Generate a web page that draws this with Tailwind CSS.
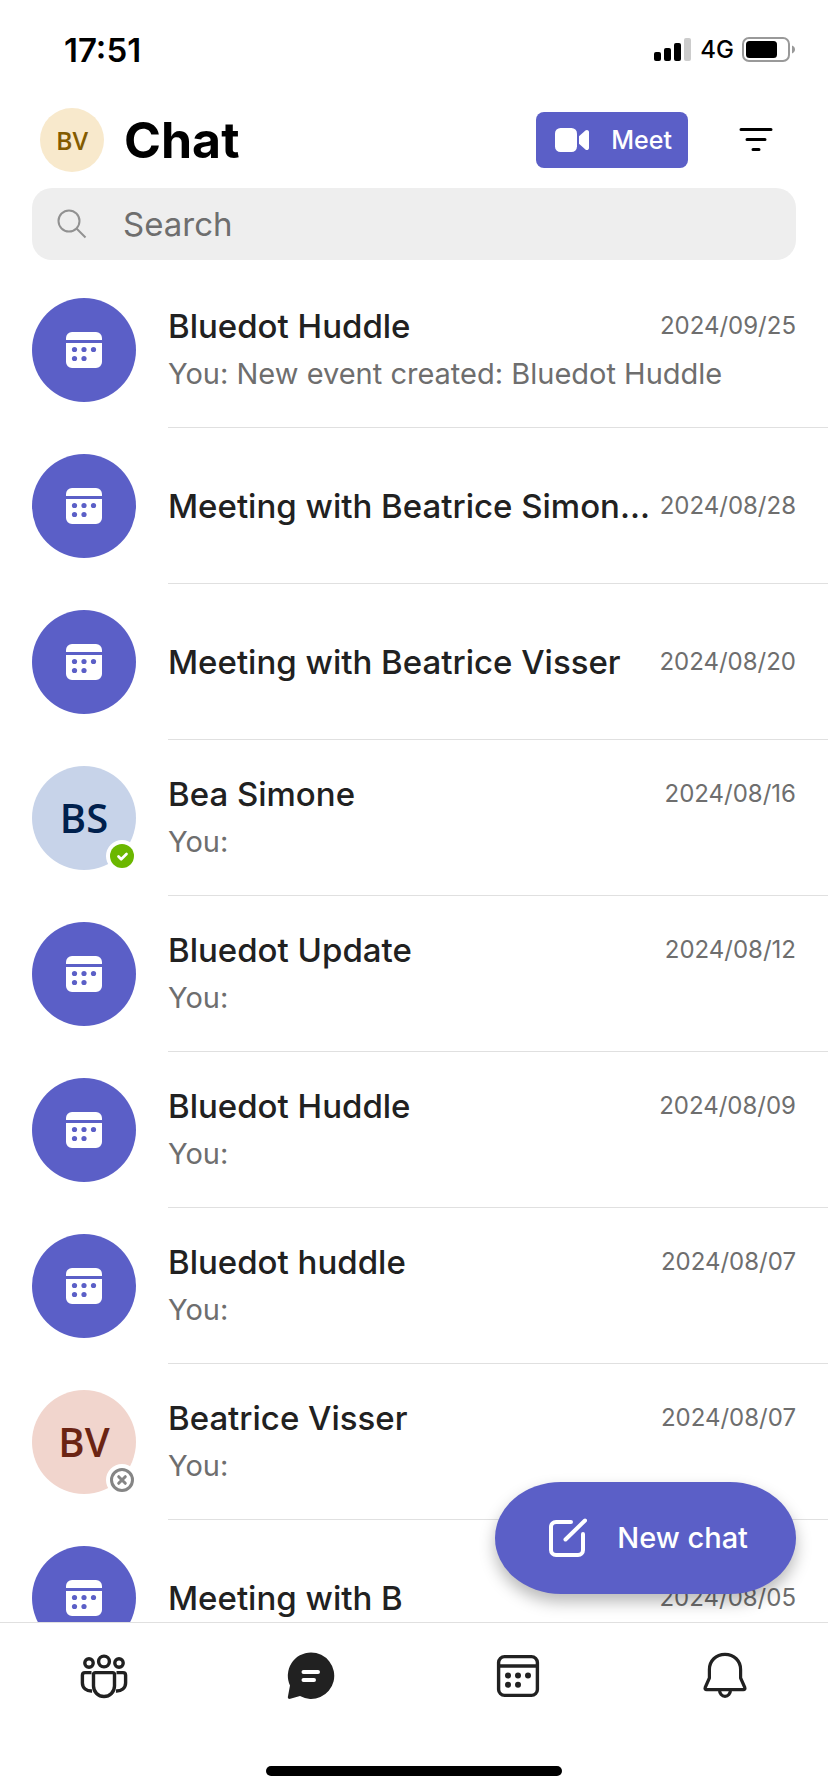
<!DOCTYPE html>
<html lang="en">
<head>
<meta charset="utf-8">
<meta name="viewport" content="width=device-width, initial-scale=1">
<title>Chat</title>
<script src="https://cdn.jsdelivr.net/npm/@tailwindcss/browser@4"></script>
</head>
<body class="bg-white">
<svg class="hidden" aria-hidden="true">
  <symbol id="event" viewBox="0 0 36 36">
    <path fill="#fff" d="M0 8V6a6 6 0 0 1 6-6h24a6 6 0 0 1 6 6v2zM0 11h36v19a6 6 0 0 1-6 6H6a6 6 0 0 1-6-6z"/>
    <g fill="#5b5fc7"><circle cx="8.500" cy="17.500" r="2.600"/><circle cx="18" cy="17.500" r="2.600"/><circle cx="27.500" cy="17.500" r="2.600"/><circle cx="8.500" cy="26.500" r="2.600"/><circle cx="18" cy="26.500" r="2.600"/></g>
  </symbol>
</svg>
<div class="flex h-screen flex-col overflow-hidden bg-white font-['Inter','Liberation_Sans',sans-serif] text-[#212121]">
  <!-- Status bar -->
  <div class="flex h-[100px] shrink-0 items-center justify-between pr-8 pl-16 text-black">
    <span class="text-[33px] leading-10 font-semibold">17:51</span>
    <div class="flex items-center gap-2">
      <svg class="h-6 w-[38px]" viewBox="0 0 38 24" aria-label="Signal"><rect x="0" y="14" width="7" height="9" rx="2"/><rect x="10" y="10" width="7" height="13" rx="2"/><rect x="20" y="5" width="7" height="18" rx="2"/><rect x="30" y="0" width="7" height="23" rx="2" fill="#ccc"/></svg>
      <span class="text-2xl leading-8 font-medium">4G</span>
      <svg class="h-[26px] w-[54px]" viewBox="0 0 54 26" aria-label="Battery"><rect x="1" y="1" width="46" height="23" rx="6" fill="none" stroke="#999" stroke-width="2"/><rect x="4" y="4" width="31" height="17" rx="3.500"/><path d="M50 8.500c2 .7 3 2.300 3 4s-1 3.300-3 4z" fill="#999"/></svg>
    </div>
  </div>

  <!-- Header -->
  <header class="shrink-0 px-8 pb-3">
    <div class="flex h-20 items-center pr-[22px] pl-2">
      <button class="flex size-16 items-center justify-center rounded-full bg-[#f8e9cc] font-['Open_Sans','Noto_Sans',sans-serif] text-[25px] leading-8 font-semibold text-[#835b00]" aria-label="Profile">BV</button>
      <h1 class="ml-5 text-[50px] leading-16 font-bold text-black">Chat</h1>
      <button class="ml-auto flex h-14 w-[152px] items-center justify-between rounded-lg bg-[#5b5fc7] pr-4 pl-[19px] text-[25px] leading-8 font-medium text-white">
        <svg class="h-6 w-[34px]" viewBox="0 0 34 24" fill="#fff" aria-hidden="true"><rect width="22" height="24" rx="5.500"/><path d="M24 8.200 30.400 2.500C31.800 1.300 34 2.200 34 4v16c0 1.800-2.200 2.700-3.600 1.500L24 15.800z"/></svg>
        Meet
      </button>
      <button class="ml-[50px] flex h-14 w-9 items-center justify-center" aria-label="Filter">
        <svg class="h-6 w-9" viewBox="0 0 36 24" stroke="#000" stroke-width="3" stroke-linecap="round" aria-hidden="true"><path d="M3 1.500h30M9 11.500h18M15 21.500h6"/></svg>
      </button>
    </div>
    <label class="mt-2 flex h-[72px] items-center gap-9 rounded-[20px] bg-[#eee] pl-[25px]">
      <svg class="h-[30px] w-[30px] shrink-0" viewBox="0 0 30 30" fill="none" stroke="#919191" stroke-width="2" aria-hidden="true"><circle cx="12" cy="12" r="10.500"/><path d="m19.500 19.500 9 9"/></svg>
      <input type="text" aria-label="Search" placeholder="Search" class="min-w-0 flex-1 bg-transparent text-[33px] leading-10 outline-none placeholder:text-[#6e6e6e]">
    </label>
  </header>

  <!-- Conversations -->
  <main class="relative min-h-0 flex-1">
    <ul class="h-full overflow-hidden">
      <li><a href="#" class="flex h-39 pl-8"><span class="mt-[26px] flex size-26 shrink-0 items-center justify-center rounded-full bg-[#5b5fc7]"><svg class="size-9"><use href="#event"/></svg></span><span class="ml-8 flex min-w-0 flex-1 flex-col justify-center border-b border-[#e0e0e0] pr-8"><span class="flex items-center justify-between gap-2"><span class="text-[33px] leading-12 font-medium whitespace-nowrap">Bluedot Huddle</span><time class="text-2xl leading-8 text-[#6e6e6e]">2024/09/25</time></span><span class="truncate text-[29px] leading-12 text-[#6e6e6e]">You: New event created: Bluedot Huddle</span></span></a></li>
      <li><a href="#" class="flex h-39 pl-8"><span class="mt-[26px] flex size-26 shrink-0 items-center justify-center rounded-full bg-[#5b5fc7]"><svg class="size-9"><use href="#event"/></svg></span><span class="ml-8 flex min-w-0 flex-1 flex-col justify-center border-b border-[#e0e0e0] pr-8"><span class="flex items-center justify-between gap-2"><span class="text-[33px] leading-12 font-medium whitespace-nowrap">Meeting with Beatrice Simon...</span><time class="text-2xl leading-8 text-[#6e6e6e]">2024/08/28</time></span></span></a></li>
      <li><a href="#" class="flex h-39 pl-8"><span class="mt-[26px] flex size-26 shrink-0 items-center justify-center rounded-full bg-[#5b5fc7]"><svg class="size-9"><use href="#event"/></svg></span><span class="ml-8 flex min-w-0 flex-1 flex-col justify-center border-b border-[#e0e0e0] pr-8"><span class="flex items-center justify-between gap-2"><span class="text-[33px] leading-12 font-medium whitespace-nowrap">Meeting with Beatrice Visser</span><time class="text-2xl leading-8 text-[#6e6e6e]">2024/08/20</time></span></span></a></li>
      <li><a href="#" class="flex h-39 pl-8"><span class="relative mt-[26px] flex size-26 shrink-0 items-center justify-center rounded-full bg-[#c7d3e9] font-['Open_Sans','Noto_Sans',sans-serif] text-[40px] leading-12 font-semibold text-[#00204d]">BS<svg class="absolute -right-0.5 -bottom-0.5 size-8" viewBox="0 0 32 32" aria-label="Available"><circle cx="16" cy="16" r="16" fill="#fff"/><circle cx="16" cy="16" r="12" fill="#6bb700"/><path d="m12.500 16.500 2.700 2.700 5.300-5.200" fill="none" stroke="#fff" stroke-width="2.700" stroke-linecap="round" stroke-linejoin="round"/></svg></span><span class="ml-8 flex min-w-0 flex-1 flex-col justify-center border-b border-[#e0e0e0] pr-8"><span class="flex items-center justify-between gap-2"><span class="text-[33px] leading-12 font-medium whitespace-nowrap">Bea Simone</span><time class="text-2xl leading-8 text-[#6e6e6e]">2024/08/16</time></span><span class="truncate text-[29px] leading-12 text-[#6e6e6e]">You:</span></span></a></li>
      <li><a href="#" class="flex h-39 pl-8"><span class="mt-[26px] flex size-26 shrink-0 items-center justify-center rounded-full bg-[#5b5fc7]"><svg class="size-9"><use href="#event"/></svg></span><span class="ml-8 flex min-w-0 flex-1 flex-col justify-center border-b border-[#e0e0e0] pr-8"><span class="flex items-center justify-between gap-2"><span class="text-[33px] leading-12 font-medium whitespace-nowrap">Bluedot Update</span><time class="text-2xl leading-8 text-[#6e6e6e]">2024/08/12</time></span><span class="truncate text-[29px] leading-12 text-[#6e6e6e]">You:</span></span></a></li>
      <li><a href="#" class="flex h-39 pl-8"><span class="mt-[26px] flex size-26 shrink-0 items-center justify-center rounded-full bg-[#5b5fc7]"><svg class="size-9"><use href="#event"/></svg></span><span class="ml-8 flex min-w-0 flex-1 flex-col justify-center border-b border-[#e0e0e0] pr-8"><span class="flex items-center justify-between gap-2"><span class="text-[33px] leading-12 font-medium whitespace-nowrap">Bluedot Huddle</span><time class="text-2xl leading-8 text-[#6e6e6e]">2024/08/09</time></span><span class="truncate text-[29px] leading-12 text-[#6e6e6e]">You:</span></span></a></li>
      <li><a href="#" class="flex h-39 pl-8"><span class="mt-[26px] flex size-26 shrink-0 items-center justify-center rounded-full bg-[#5b5fc7]"><svg class="size-9"><use href="#event"/></svg></span><span class="ml-8 flex min-w-0 flex-1 flex-col justify-center border-b border-[#e0e0e0] pr-8"><span class="flex items-center justify-between gap-2"><span class="text-[33px] leading-12 font-medium whitespace-nowrap">Bluedot huddle</span><time class="text-2xl leading-8 text-[#6e6e6e]">2024/08/07</time></span><span class="truncate text-[29px] leading-12 text-[#6e6e6e]">You:</span></span></a></li>
      <li><a href="#" class="flex h-39 pl-8"><span class="relative mt-[26px] flex size-26 shrink-0 items-center justify-center rounded-full bg-[#f1d5cd] font-['Open_Sans','Noto_Sans',sans-serif] text-[40px] leading-12 font-semibold text-[#6b2413]">BV<svg class="absolute -right-0.5 -bottom-0.5 size-8" viewBox="0 0 32 32" aria-label="Offline"><circle cx="16" cy="16" r="16" fill="#fff"/><circle cx="16" cy="16" r="10.500" fill="none" stroke="#858585" stroke-width="3"/><path d="m12.700 12.700 6.600 6.600m0-6.600-6.600 6.600" stroke="#858585" stroke-width="3" stroke-linecap="round"/></svg></span><span class="ml-8 flex min-w-0 flex-1 flex-col justify-center border-b border-[#e0e0e0] pr-8"><span class="flex items-center justify-between gap-2"><span class="text-[33px] leading-12 font-medium whitespace-nowrap">Beatrice Visser</span><time class="text-2xl leading-8 text-[#6e6e6e]">2024/08/07</time></span><span class="truncate text-[29px] leading-12 text-[#6e6e6e]">You:</span></span></a></li>
      <li><a href="#" class="flex h-39 pl-8"><span class="mt-[26px] flex size-26 shrink-0 items-center justify-center rounded-full bg-[#5b5fc7]"><svg class="size-9"><use href="#event"/></svg></span><span class="ml-8 flex min-w-0 flex-1 flex-col justify-center border-b border-[#e0e0e0] pr-8"><span class="flex items-center justify-between gap-2"><span class="text-[33px] leading-12 font-medium whitespace-nowrap">Meeting with B</span><time class="text-2xl leading-8 text-[#6e6e6e]">2024/08/05</time></span></span></a></li>
    </ul>
    <button class="absolute right-8 bottom-7 flex h-28 w-[301px] items-center justify-between rounded-[66px/56px] bg-[#5b5fc7] pr-12 pl-[52px] text-[29px] leading-10 font-medium text-white shadow-[0_8px_16px_rgba(0,0,0,0.28)]">
      <svg class="size-10" viewBox="0 0 40 40" fill="none" stroke="#fff" stroke-width="4" stroke-linecap="round" stroke-linejoin="round" aria-hidden="true"><path d="M24 4H9a5 5 0 0 0-5 5v23a5 5 0 0 0 5 5h22a5 5 0 0 0 5-5V16M18.500 21.500 38 2.500"/></svg>
      New chat
    </button>
  </main>

  <!-- Tab bar -->
  <footer class="flex h-[170px] shrink-0 flex-col items-center border-t border-[#e0e0e0] bg-white pb-4">
    <nav class="grid w-full grid-cols-4 pt-[25px]">
      <button class="flex justify-center" aria-label="Teams">
        <svg class="h-14 w-14" viewBox="0 0 56 56" fill="none" stroke="#212121" stroke-width="3.400" aria-hidden="true"><circle cx="28" cy="13.500" r="5.400"/><circle cx="13" cy="15" r="4.200"/><circle cx="43" cy="15" r="4.200"/><path d="M19.500 24.600h17c1.200 0 2 .8 2 2V38a10.500 10.500 0 0 1-21 0V26.600c0-1.200.8-2 2-2zM15.500 24.600H9c-1.700 0-2.600.9-2.600 2.600V35c0 5 4.100 8.300 9.600 8M40.500 24.600H47c1.700 0 2.600.9 2.600 2.600V35c0 5-4.100 8.300-9.600 8"/></svg>
      </button>
      <button class="flex justify-center" aria-label="Chat">
        <svg class="h-14 w-14" viewBox="0 0 56 56" aria-hidden="true"><path fill="#212121" d="M28 4.500a23.200 23.200 0 1 1-11 43.600l-9.700 2.700c-1.600.4-2.700-.5-2.400-2.100l2.100-11.200A23.200 23.200 0 0 1 28 4.500z"/><path d="M20.500 24H35M20.500 32H31" stroke="#fff" stroke-width="4" stroke-linecap="round"/></svg>
      </button>
      <button class="flex justify-center" aria-label="Calendar">
        <svg class="h-14 w-14" viewBox="0 0 56 56" aria-hidden="true"><g fill="none" stroke="#212121" stroke-width="3.400"><rect x="8.600" y="8.600" width="38.800" height="38.800" rx="6"/><path d="M8 18h40"/></g><g fill="#212121"><circle cx="18" cy="27.500" r="3"/><circle cx="28" cy="27.500" r="3"/><circle cx="38" cy="27.500" r="3"/><circle cx="18" cy="36.800" r="3"/><circle cx="28" cy="36.800" r="3"/></g></svg>
      </button>
      <button class="flex justify-center" aria-label="Activity">
        <svg class="h-14 w-14" viewBox="0 0 56 56" fill="none" stroke="#212121" stroke-width="3.200" stroke-linejoin="round" aria-hidden="true"><path d="M28 6.400C18.800 6.400 12.400 13 12.400 21.500V30l-4.200 9.500c-.5 1.300.1 2.100 1.400 2.100h36.800c1.300 0 1.900-.8 1.400-2.100L43.600 30v-8.500C43.600 13 37.200 6.400 28 6.400zM22.500 42a5.500 6.300 0 0 0 11 0"/></svg>
      </button>
    </nav>
    <div class="mt-auto h-2.5 w-[296px] rounded-full bg-black"></div>
  </footer>
</div>
</body>
</html>
